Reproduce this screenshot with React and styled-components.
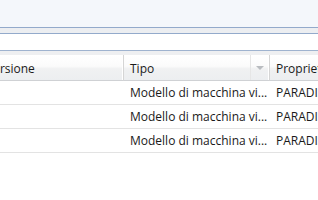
import React from "react";
import styled, { createGlobalStyle } from "styled-components";

const Global = createGlobalStyle`
  html, body { margin: 0; padding: 0; background: #ffffff; overflow: hidden; }
  body { width: 318px; height: 200px; font-family: "Segoe UI", "Open Sans", "Noto Sans", sans-serif; }
`;

const Page = styled.div`
  width: 318px;
  height: 200px;
  display: flex;
  flex-direction: column;
  overflow: hidden;
  background: #fff;
`;

const TopBar = styled.div`
  height: 27px;
  background: #f4f7fb;
  flex: none;
`;

const Rail = styled.div`
  height: 5px;
  background: #eceef1;
  border-top: 1px solid #93aacb;
  border-bottom: 1px solid #93aacb;
  flex: none;
`;

const Spacer = styled.div`
  height: 16px;
  background: #fff;
  flex: none;
`;

const HeaderFrame = styled.div`
  border-top: 1px solid #9fb3cf;
  padding-top: 4px;
  background: #eeeff1;
  flex: none;
`;

const Grid = styled.div`
  display: grid;
  grid-template-columns: 144px 146px 80px;
  margin-left: -20px;
`;

const HeadCell = styled.div`
  position: relative;
  height: 25px;
  display: flex;
  align-items: center;
  padding-left: 6px;
  padding-top: 1px;
  box-sizing: border-box;
  font-size: 12px;
  color: #1a1a1a;
  background: linear-gradient(#ffffff 0%, #fbfbfb 45%, #f0f1f2 55%, #eceef0 100%);
  border-right: 1px solid #d5d5d5;
  box-shadow: inset -1px 0 0 #ffffff;
  white-space: nowrap;
  overflow: hidden;
  border-bottom: 1px solid #cfd1d4;
  height: 26px;
`;

const DropZone = styled.div`
  position: absolute;
  right: 0;
  top: 0;
  bottom: 0;
  width: 18px;
  border-left: 1px solid #e6e6e6;
  display: flex;
  align-items: center;
  justify-content: center;
`;

const Arrow = styled.div`
  width: 0;
  height: 0;
  border-left: 4px solid transparent;
  border-right: 4px solid transparent;
  border-top: 4px solid #b9bcc0;
`;

const Cell = styled.div`
  height: 23px;
  display: flex;
  align-items: center;
  padding-left: 6px;
  font-size: 12px;
  color: #1a1a1a;
  border-bottom: 1px solid #e3e3e3;
  white-space: nowrap;
  overflow: hidden;
`;

const rows = [0, 1, 2];

export default function App() {
  return (
    <Page>
      <Global />
      <TopBar />
      <Rail />
      <Spacer />
      <HeaderFrame>
        <Grid>
          <HeadCell>Versione</HeadCell>
          <HeadCell>
            Tipo
            <DropZone>
              <Arrow />
            </DropZone>
          </HeadCell>
          <HeadCell>Proprietario</HeadCell>
        </Grid>
      </HeaderFrame>
      <Grid>
        {rows.map((r) => (
          <React.Fragment key={r}>
            <Cell />
            <Cell>Modello di macchina vi...</Cell>
            <Cell>PARADISE</Cell>
          </React.Fragment>
        ))}
      </Grid>
    </Page>
  );
}
